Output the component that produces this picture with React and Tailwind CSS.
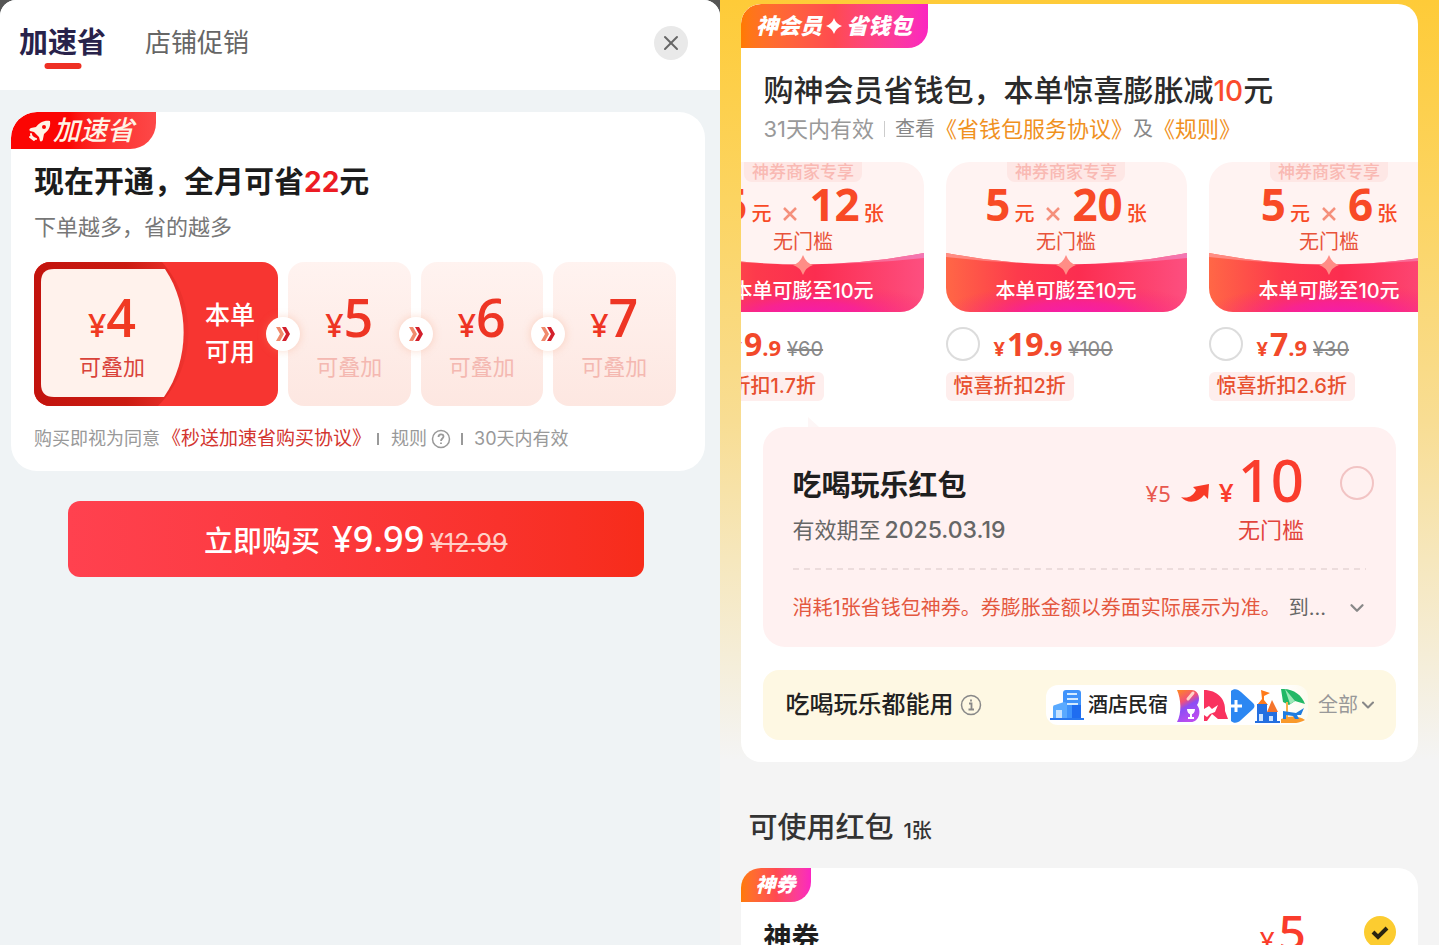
import React, { useState } from 'react'
import { ChevronDown, X } from 'lucide-react'

const steps = [5, 6, 7]

const packs = [
    { id: 'p12', count: 12, whole: '9', cents: '.9', old: '¥60', off: '惊喜折扣1.7折' },
    { id: 'p20', count: 20, whole: '19', cents: '.9', old: '¥100', off: '惊喜折扣2折' },
    { id: 'p6', count: 6, whole: '7', cents: '.9', old: '¥30', off: '惊喜折扣2.6折' }
]

function Rocket() {
    return (
        <svg className="w-[22px] h-[22px]" viewBox="0 0 22 22" aria-hidden="true">
            <path fill="#fff3e6" fillRule="evenodd" d="M21 1C15 0 10 3 7 7L2 8C0 9 0 10 1 11L5 12L10 17L11 21C12 22 14 21 14 19L15 14C19 11 22 7 21 1ZM15 5A2 2 0 1 1 15 9A2 2 0 1 1 15 5Z" />
            <path fill="none" stroke="#fff3e6" strokeWidth="2" strokeLinecap="round" d="M2 14C2 16 4 18 7 19M1 17L5 20" />
        </svg>
    )
}

function Arrows() {
    return (
        <span className="absolute -left-[22px] top-1/2 -translate-y-1/2 w-[34px] h-[34px] rounded-full bg-white shadow-[0_0_8px_rgba(240,150,110,0.35)] flex items-center justify-center">
            <svg className="w-3.5 h-4" viewBox="0 0 14 16" aria-hidden="true">
                <path fill="#f08a6c" d="M0 1H4L8 8L4 15H0L4 8Z" />
                <path fill="#d3202c" d="M6 1H10L14 8L10 15H6L10 8Z" />
            </svg>
        </span>
    )
}

function Band({ id }) {
    return (
        <svg className="absolute bottom-0 left-0 w-full h-[60px]" viewBox="0 0 241 60" preserveAspectRatio="none" aria-hidden="true">
            <defs>
                <linearGradient id={`${id}-h`} x1="0" x2="1" y1="0" y2="0">
                    <stop offset="0" stopColor="#ff6746" />
                    <stop offset="0.3" stopColor="#fd3a4c" />
                    <stop offset="0.55" stopColor="#fc2d50" />
                    <stop offset="1" stopColor="#fd4f80" />
                </linearGradient>
                <radialGradient id={`${id}-r`} cx="0.53" cy="1.05" r="0.55">
                    <stop offset="0" stopColor="#f31cb0" />
                    <stop offset="0.4" stopColor="#f71fa0" stopOpacity="0.8" />
                    <stop offset="1" stopColor="#fb2d6d" stopOpacity="0" />
                </radialGradient>
                <linearGradient id={`${id}-s`} x1="0" x2="1" y1="0" y2="0">
                    <stop offset="0" stopColor="#ff8f86" />
                    <stop offset="0.5" stopColor="#ff7d8a" stopOpacity="0.3" />
                    <stop offset="1" stopColor="#f277b4" />
                </linearGradient>
            </defs>
            <path d="M0 1Q120 24 241 1V60H0Z" fill={`url(#${id}-h)`} />
            <path d="M0 1Q120 24 241 1V60H0Z" fill={`url(#${id}-r)`} />
            <path d="M0 1Q120 24 241 1V6Q120 19 0 5Z" fill={`url(#${id}-s)`} />
            <path d="M120 3Q123 11 130 13Q123 15 120 23Q117 15 110 13Q117 11 120 3Z" fill="#ff8d86" />
        </svg>
    )
}

function Pack({ pack, picked, onPick }) {
    return (
        <label className="block w-[241px] shrink-0 cursor-pointer">
            <span className="relative flex flex-col items-center h-[150px] rounded-3xl overflow-hidden bg-[#fff3f2]">
                <Band id={pack.id} />
                <span className="px-2 h-5 rounded-b-lg bg-[#fee7e5] text-[17px] leading-5 font-medium text-[#f9b9b3]">神券商家专享</span>
                <span className="flex items-baseline text-[44px] leading-[44px] font-bold text-[#f84a26] font-['Open_Sans','Noto_Sans_CJK_SC',sans-serif]">
                    5
                    <span className="ml-1 text-xl leading-none font-medium">元</span>
                    <svg className="mx-3 mb-0.5 w-3.5 h-3.5" viewBox="0 0 14 14" aria-hidden="true">
                        <path d="M1 1L13 13M13 1L1 13" stroke="#f5907c" strokeWidth="2.500" />
                    </svg>
                    {pack.count}
                    <span className="ml-1 text-xl leading-none font-medium">张</span>
                </span>
                <span className="mt-0.5 text-xl leading-7 text-[#e8533a]">无门槛</span>
                <span className="relative mt-[21px] text-xl leading-7 font-medium text-white">本单可膨至10元</span>
            </span>
            <span className="flex items-center mt-[15px] h-[34px]">
                <input
                    type="radio"
                    name="pack"
                    checked={picked}
                    onChange={onPick}
                    className="appearance-none w-[34px] h-[34px] rounded-full border-2 border-[#dcdcdc] checked:border-[#f84a26] bg-white"
                />
                <span className="ml-3.5 text-[32px] leading-[34px] font-bold text-[#f2492a] font-['Open_Sans',sans-serif]">
                    <span className="mr-0.5 text-xl leading-none">¥</span>{pack.whole}<span className="text-[22px] leading-none">{pack.cents}</span>
                    <s className="ml-1.5 text-xl leading-none font-normal text-[#888] font-['Inter',sans-serif]">{pack.old}</s>
                </span>
            </span>
            <span className="inline-block mt-[11px] px-2 rounded-md bg-[#feeeed] text-xl leading-[29px] font-medium text-[#e8502f]">{pack.off}</span>
        </label>
    )
}

function ServiceIcons() {
    return (
        <svg className="w-[132px] h-9" viewBox="0 0 132 36" aria-hidden="true">
            <defs>
                <linearGradient id="bar" x1="0" x2="0.4" y1="0" y2="1">
                    <stop offset="0" stopColor="#ff8a1f" />
                    <stop offset="0.4" stopColor="#f2507a" />
                    <stop offset="0.6" stopColor="#8b4df5" />
                    <stop offset="1" stopColor="#b94df0" />
                </linearGradient>
            </defs>
            {/* bar and drinks */}
            <path d="M1 3H16C23 3 25 13 21 18C26 24 23 35 15 35H1C6 26 5 12 1 3Z" fill="url(#bar)" />
            <path d="M12 12L17 6" stroke="#ffd3c8" strokeWidth="3" strokeLinecap="round" />
            <path d="M11 22H19C19 29 11 29 11 22Z" fill="#fff" />
            <path d="M15 26V31M12 31H18" stroke="#fff" strokeWidth="2" fill="none" />
            {/* beauty */}
            <path d="M28 3C41 3 50 12 49 24L52 32H42L36 27L31 34H28Z" fill="#f9325f" />
            <path d="M28 22L33 19L36 22L42 18L39 25L34 27L31 30L28 28Z" fill="#fff" />
            {/* pharmacy */}
            <path d="M55 4C58 1 62 2 65 5L77 16C79 18 79 20 77 22L65 33C62 36 58 37 55 34Z" fill="#2c87f2" />
            <path d="M60 13V25M55 19H66" stroke="#fff" strokeWidth="3" />
            {/* castle */}
            <path d="M85 3L94 6L88 9V13L92 18H81L86 12Z" fill="#ff7a1a" />
            <path d="M96 13L102 25H91Z" fill="#f5742b" />
            <path d="M81 17H91V25H101V34H104V36H79V34H81Z" fill="#246fe0" />
            <path d="M83 27H87V34H83ZM93 29H97V34H93Z" fill="#cfe4ff" />
            {/* beach */}
            <path d="M105 2C117 1 126 8 129 17L119 14L113 18L107 15Z" fill="#22b866" />
            <path d="M109 2L119 14L114 17Z" fill="#9be8b6" />
            <path d="M111 15V34" stroke="#f8b04a" strokeWidth="2" />
            <path d="M105 32C114 28 124 29 129 33C123 37 111 37 105 36Z" fill="#f99a2c" />
            <path d="M107 24L120 26L128 21L125 28H121L123 32H119L117 29L110 28V32H107Z" fill="#1f7ce0" />
        </svg>
    )
}

function Hotel() {
    return (
        <svg className="w-[34px] h-8" viewBox="0 0 34 32" aria-hidden="true">
            <path d="M13 4Q13 1 16 1H28Q31 1 31 4V29H13Z" fill="#3f93fb" />
            <path d="M22 16H31V29H22Z" fill="#1f6df0" />
            <path d="M17 5H27M17 10H28M17 15H28" stroke="#d3eaff" strokeWidth="2" />
            <path d="M3 18Q3 16 5 16L14 13Q17 13 17 16V29H3Z" fill="#5aaaff" />
            <path d="M6 21H12V29H6Z" fill="#c6e3ff" />
            <path d="M0 29H34V31H0Z" fill="#2878f0" />
        </svg>
    )
}

function LeftPanel() {
    return (
        <section className="w-1/2 min-w-0 bg-[#555]">
            <div className="h-full rounded-t-2xl overflow-hidden bg-[#eff3f5]">
                <header className="flex items-center h-[90px] pl-[19px] pr-8 pb-1 bg-white">
                    <button className="relative text-[29px] leading-10 font-bold text-[#28224a]">
                        加速省
                        <span className="absolute left-1/2 top-full -translate-x-1/2 w-[37px] h-1.5 rounded-full bg-[#ee3024]" />
                    </button>
                    <button className="ml-[39px] text-[26px] leading-10 text-[#666]">店铺促销</button>
                    <button aria-label="关闭" className="ml-auto w-[34px] h-[34px] rounded-full bg-[#e9e9e9] flex items-center justify-center">
                        <X className="w-6 h-6 text-[#666]" strokeWidth={2} />
                    </button>
                </header>

                <div className="mt-[22px] ml-[11px] mr-[15px] rounded-[26px] bg-white overflow-hidden pb-[18px]">
                    <div className="flex items-center justify-center w-[145px] h-[37px] rounded-tl-[26px] rounded-br-[26px] bg-gradient-to-r from-[#fb0503] from-40% to-[#fd4848]">
                        <Rocket />
                        <span className="ml-0.5 mr-1 text-[27px] leading-9 font-medium italic text-[#fff3e6]">加速省</span>
                    </div>
                    <div className="pl-[23px] pr-[29px]">
                        <h2 className="mt-3 text-[30px] leading-10 font-bold text-[#1c1c1c]">现在开通，全月可省<span className="text-[28px] leading-none text-[#ec1c24]">22</span>元</h2>
                        <p className="mt-[11px] text-[22px] leading-[30px] text-[#777]">下单越多，省的越多</p>

                        {/* Coupon ladder */}
                        <div className="flex gap-2.5 mt-5 h-36 text-center">
                            <div className="relative flex w-[244px] shrink-0 rounded-2xl overflow-hidden bg-[#f73531]">
                                <svg className="absolute inset-0 w-full h-full" viewBox="0 0 244 144" preserveAspectRatio="none" aria-hidden="true">
                                    <defs>
                                        <linearGradient id="edge" x1="0" x2="1" y1="0" y2="0">
                                            <stop offset="0" stopColor="#c2130d" />
                                            <stop offset="0.6" stopColor="#cb1c12" />
                                            <stop offset="1" stopColor="#f13430" />
                                        </linearGradient>
                                    </defs>
                                    <path d="M0 0H128C164 40 164 104 124 144H0Z" fill="url(#edge)" />
                                    <path d="M20 7H131C156 44 156 98 130 135H20Q7 135 7 122V20Q7 7 20 7Z" fill="#fff2ec" />
                                </svg>
                                <div className="relative w-[156px] pt-[27px]">
                                    <p className="text-[52px] leading-[56px] font-semibold text-[#f03a22] font-['Open_Sans',sans-serif]"><span className="text-[32px] leading-none">¥</span>4</p>
                                    <p className="mt-2 text-[22px] leading-7 text-[#d9433a]">可叠加</p>
                                </div>
                                <p className="relative flex-1 self-center pr-2 text-[25px] leading-[37px] font-medium text-white">本单<br />可用</p>
                            </div>
                            {steps.map((n) => (
                                <div key={n} className="relative flex-1 pt-[27px] rounded-2xl bg-gradient-to-b from-[#fff3f0] to-[#fde7e1]">
                                    <Arrows />
                                    <p className="text-[52px] leading-[56px] font-semibold text-[#ee3524] font-['Open_Sans',sans-serif]"><span className="text-[32px] leading-none">¥</span>{n}</p>
                                    <p className="mt-2 text-[22px] leading-7 text-[#f4b8b1]">可叠加</p>
                                </div>
                            ))}
                        </div>

                        <div className="flex items-center mt-[19px] text-lg leading-7 text-[#999] whitespace-nowrap">
                            购买即视为同意
                            <a href="#agreement" className="ml-0.5 text-[19px] text-[#d3352f]">《秒送加速省购买协议》</a>
                            <span className="ml-1.5 w-0.5 h-3 bg-[#999]" />
                            <span className="ml-3">规则</span>
                            <svg className="ml-1 w-5 h-5" viewBox="0 0 20 20" fill="none" stroke="#999" strokeWidth="1.500" aria-hidden="true">
                                <circle cx="10" cy="10" r="8.500" />
                                <path d="M7.500 8C7.500 4.500 12.500 4.500 12.500 7.500C12.500 9.500 10 9.500 10 12M10 13.500V15" strokeWidth="1.800" />
                            </svg>
                            <span className="ml-2.5 w-0.5 h-3 bg-[#999]" />
                            <span className="ml-[11px]">30天内有效</span>
                        </div>
                    </div>
                </div>

                <div className="mt-[30px] ml-[68px] mr-[76px]">
                    <button className="w-full h-[76px] pt-1 rounded-xl bg-gradient-to-r from-[#ff414f] to-[#f72c1a] text-white flex items-center justify-center">
                        <span className="flex items-baseline">
                            <span className="text-[29px] leading-10 font-medium">立即购买</span>
                            <span className="ml-3 text-4xl leading-10 font-medium font-['Noto_Sans',sans-serif]">¥9.99</span>
                            <s className="ml-1.5 text-[25px] leading-10 text-[#ffd0c8]">¥12.99</s>
                        </span>
                    </button>
                </div>
            </div>
        </section>
    )
}

function RightPanel() {
    const [picked, setPicked] = useState('')

    return (
        <section className="w-1/2 min-w-0 px-[21px] pt-1 bg-[#f4f4f4] bg-[linear-gradient(180deg,#fecb38_0,#fcd461_200px,#f8dd93_420px,#f6e7bd_560px,#f4f4f4_760px)]">
            <div className="rounded-[20px] bg-white overflow-hidden pb-[22px]">
                <div className="flex items-center justify-center gap-1 w-[187px] h-11 rounded-tl-[20px] rounded-br-[20px] bg-gradient-to-r from-[#ff7a00] via-[#ff4a50] to-[#fb25c0] text-[22px] leading-8 font-black italic text-white">
                    神会员
                    <svg className="w-4 h-4" viewBox="0 0 16 16" aria-hidden="true">
                        <path d="M8 0Q10 6 16 8Q10 10 8 16Q6 10 0 8Q6 6 8 0Z" fill="#fff" />
                    </svg>
                    省钱包
                </div>

                <div className="px-[23px] whitespace-nowrap">
                    <h2 className="mt-[22px] text-[30px] leading-10 font-medium text-[#2b2b2b]">购神会员省钱包，本单惊喜膨胀减<span className="text-[28px] leading-none text-[#fa4b2c]">10</span>元</h2>
                    <div className="flex items-center mt-1 h-[30px] text-[22px] leading-[30px] text-[#999]">
                        31天内有效
                        <span className="mx-2.5 w-px h-4 bg-[#ccc]" />
                        <span className="text-xl leading-[30px] text-[#888]">查看</span>
                        <a href="#service" className="text-[#f0911e]">《省钱包服务协议》</a>
                        <span className="text-xl leading-[30px] text-[#888]">及</span>
                        <a href="#rules" className="text-[#f0911e]">《规则》</a>
                    </div>
                </div>

                {/* Pack carousel, scrolled part way */}
                <div className="flex gap-[22px] mt-[18px] -ml-[58px] whitespace-nowrap">
                    {packs.map((pack) => (
                        <Pack key={pack.id} pack={pack} picked={picked === pack.id} onPick={() => setPicked(pack.id)} />
                    ))}
                </div>

                <div className="relative mx-[22px] mt-[26px] rounded-[22px] bg-[#fff1f1] pt-[23px] pb-[25px] pl-[30px] pr-[22px] whitespace-nowrap">
                    <svg className="absolute -top-2.5 left-10 w-5 h-2.5" viewBox="0 0 20 10" aria-hidden="true">
                        <path d="M5 0L16 10H5Z" fill="#fdf6f6" />
                    </svg>
                    <div className="flex items-end">
                        <div>
                            <h3 className="text-[29px] leading-10 font-bold text-[#1f1f1f]">吃喝玩乐红包</h3>
                            <p className="mt-2.5 text-[22px] leading-7 text-[#666]">有效期至<span className="ml-1 text-[23px] leading-none font-medium">2025.03.19</span></p>
                        </div>
                        <div className="ml-auto text-right">
                            <p className="flex items-baseline justify-end text-[58px] leading-[60px] font-medium text-[#fa3c2c] font-['Noto_Sans',sans-serif]">
                                <span className="text-[22px] leading-none font-normal text-[#e8584e]">¥5</span>
                                <svg className="mx-2.5 w-7 h-[18px]" viewBox="0 0 28 18" aria-hidden="true">
                                    <path d="M0 13C7 15 12 12 15 6L12 3L28 0L27 15L23 11C17 19 6 20 0 13Z" fill="#f83a26" />
                                </svg>
                                <span className="mr-1 text-[26px] leading-none font-semibold">¥</span>
                                10
                            </p>
                            <p className="mt-1.5 text-[22px] leading-7 text-[#e2443c]">无门槛</p>
                        </div>
                        <input
                            type="radio"
                            name="bonus"
                            aria-label="吃喝玩乐红包"
                            className="appearance-none self-start mt-4 ml-9 w-[34px] h-[34px] rounded-full border-2 border-[#f2c4c4] checked:border-[#fa3c2c]"
                        />
                    </div>
                    <svg className="block mt-6 w-full h-0.5 pr-2" aria-hidden="true">
                        <line x1="0" y1="1" x2="100%" y2="1" stroke="#ecdcdc" strokeWidth="2" strokeDasharray="6 5" />
                    </svg>
                    <div className="flex items-center mt-6 pr-1.5 text-xl leading-7 text-[#666]">
                        <p className="flex-1"><span className="mr-2 text-[#e4583f]">消耗1张省钱包神券。券膨胀金额以券面实际展示为准。</span>到...</p>
                        <button aria-label="展开"><ChevronDown className="w-[22px] h-[22px] text-[#888]" strokeWidth={2.5} /></button>
                    </div>
                </div>

                <div className="flex items-center mx-[22px] mt-[23px] h-[70px] rounded-2xl bg-[#fef8e3] pl-[23px] pr-[18px] whitespace-nowrap">
                    <span className="text-2xl leading-9 font-medium text-[#222]">吃喝玩乐都能用</span>
                    <svg className="ml-1.5 w-[22px] h-[22px]" viewBox="0 0 22 22" fill="none" stroke="#888" strokeWidth="1.500" aria-hidden="true">
                        <circle cx="11" cy="11" r="9.500" />
                        <path d="M9 9.500H11.500V15.500M8.500 15.500H14M11 5.500V7.500" strokeWidth="1.800" />
                    </svg>
                    <div className="flex items-center ml-auto h-10 pl-1 rounded-xl bg-gradient-to-r from-white from-90% to-white/40">
                        <Hotel />
                        <span className="ml-1 mr-2 text-xl leading-8 font-medium text-[#222]">酒店民宿</span>
                        <ServiceIcons />
                    </div>
                    <button className="flex items-center ml-2.5 text-xl leading-8 text-[#999]">
                        全部
                        <ChevronDown className="w-5 h-5 text-[#888]" strokeWidth={2.5} />
                    </button>
                </div>
            </div>

            <h2 className="mt-[46px] ml-2 text-[29px] leading-10 font-medium text-[#333]">可使用红包<span className="ml-2.5 text-xl leading-none">1张</span></h2>

            <div className="mt-5 h-[220px] rounded-[20px] bg-white">
                <div className="flex items-center justify-center w-[70px] h-[34px] rounded-tl-[20px] rounded-br-[20px] bg-gradient-to-r from-[#ff7a00] via-[#ff4a50] to-[#fb25c0] text-xl font-black italic text-white">神券</div>
                <div className="flex items-start pl-[23px] pr-[22px]">
                    <h3 className="mt-4 text-[28px] leading-10 font-bold text-[#1f1f1f]">神券</h3>
                    <p className="ml-auto text-[48px] leading-[60px] font-medium text-[#fa3c2c] font-['Noto_Sans',sans-serif]"><span className="mr-1 text-[26px] leading-none">¥</span>5</p>
                    <span className="relative ml-[58px] mt-3.5 w-8 h-8">
                        <input type="checkbox" defaultChecked aria-label="神券" className="block appearance-none w-8 h-8 rounded-full bg-[#fccc30]" />
                        <svg className="absolute inset-0 w-8 h-8 pointer-events-none" viewBox="0 0 32 32" aria-hidden="true">
                            <path d="M9 16L14 21L23 12" fill="none" stroke="#2a2410" strokeWidth="4" />
                        </svg>
                    </span>
                </div>
            </div>
        </section>
    )
}

function App() {
    return (
        <main className="flex h-screen overflow-hidden font-['Inter','Noto_Sans_CJK_SC',sans-serif]">
            <LeftPanel />
            <RightPanel />
        </main>
    )
}

export default App
